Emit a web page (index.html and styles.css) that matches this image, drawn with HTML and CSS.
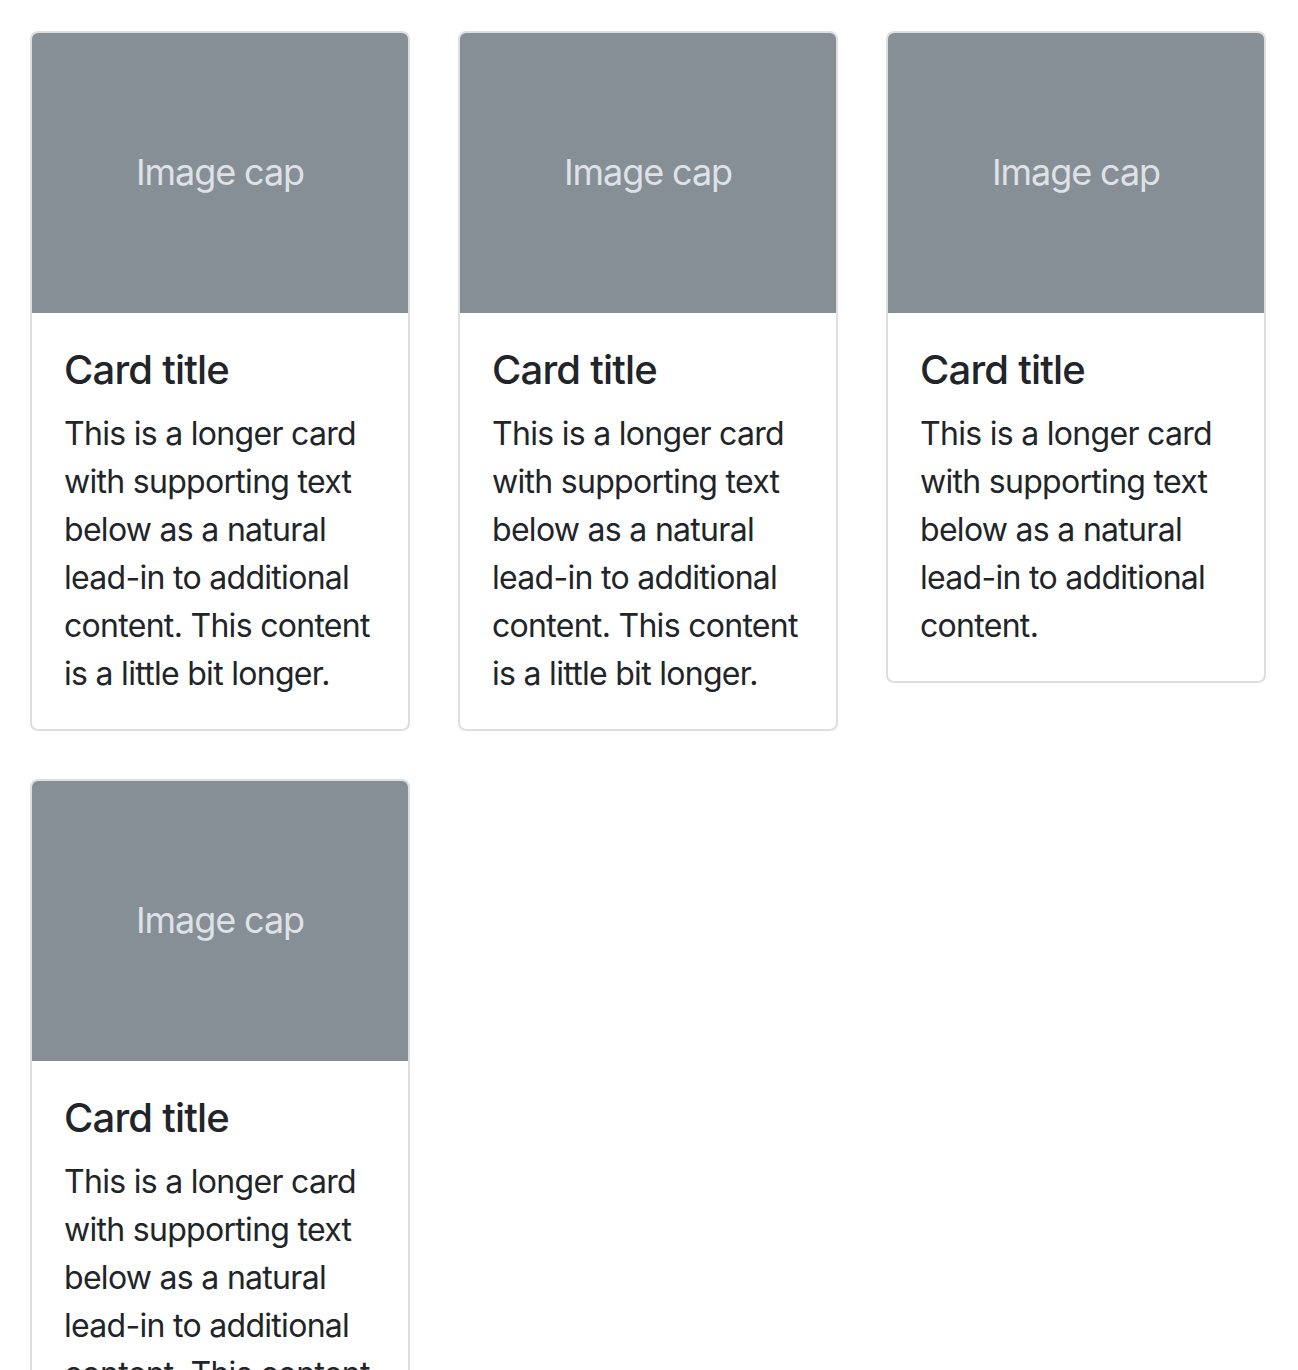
FILE: index.html
```html
<!DOCTYPE html>
<html lang="en">
<head>
<meta charset="utf-8">
<title>Cards</title>
<link rel="stylesheet" href="styles.css">
</head>
<body>
<div class="grid">
  <div class="card">
    <div class="cap">Image cap</div>
    <div class="body">
      <h5 class="title">Card title</h5>
      <p class="text">This is a longer card with supporting text below as a natural lead-in to additional content. This content is a little bit longer.</p>
    </div>
  </div>
  <div class="card">
    <div class="cap">Image cap</div>
    <div class="body">
      <h5 class="title">Card title</h5>
      <p class="text">This is a longer card with supporting text below as a natural lead-in to additional content. This content is a little bit longer.</p>
    </div>
  </div>
  <div class="card">
    <div class="cap">Image cap</div>
    <div class="body">
      <h5 class="title">Card title</h5>
      <p class="text">This is a longer card with supporting text below as a natural lead-in to additional content.</p>
    </div>
  </div>
  <div class="card">
    <div class="cap">Image cap</div>
    <div class="body">
      <h5 class="title">Card title</h5>
      <p class="text">This is a longer card with supporting text below as a natural lead-in to additional content. This content is a little bit longer.</p>
    </div>
  </div>
</div>
</body>
</html>
```
FILE: styles.css
```css
html, body {
  margin: 0;
  padding: 0;
  background: #fff;
}
body {
  font-family: Inter, "Noto Sans", "Liberation Sans", sans-serif;
  color: #212529;
  font-size: 32px;
  line-height: 48px;
  letter-spacing: -0.022em;
}
.grid {
  display: grid;
  grid-template-columns: repeat(3, 380px);
  column-gap: 48px;
  row-gap: 48px;
  padding: 31px 32px 0 30px;
  align-items: start;
}
.card {
  border: 2px solid #dfdfdf;
  border-radius: 8px;
  overflow: hidden;
  background: #fff;
}
.cap {
  height: 280px;
  background: #868e96;
  color: #dee2e6;
  display: flex;
  align-items: center;
  justify-content: center;
  font-size: 36px;
  letter-spacing: -0.03em;
  padding-bottom: 2px;
  box-sizing: border-box;
}
.body {
  padding: 32px;
}
.title {
  margin: 0 0 16px;
  font-size: 40px;
  line-height: 48px;
  font-weight: 500;
  letter-spacing: -0.02em;
  position: relative;
  top: 1px;
}
.text {
  margin: 0;
  position: relative;
  top: 1px;
}
```
